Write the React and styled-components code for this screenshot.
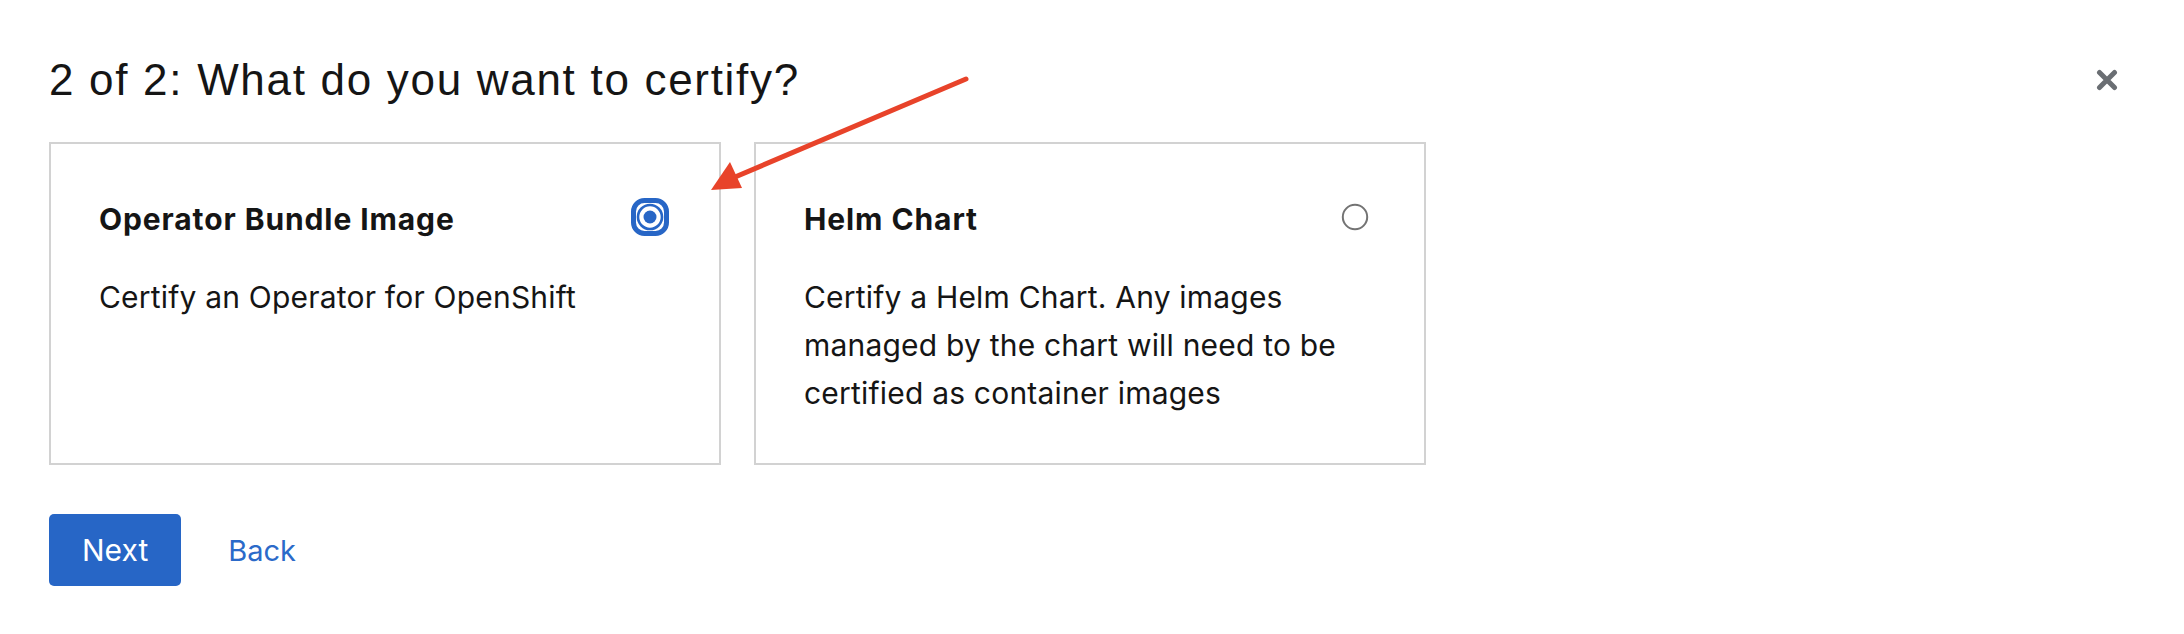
import React from 'react';
import styled, { createGlobalStyle } from 'styled-components';

const GlobalStyle = createGlobalStyle`
  body {
    margin: 0;
    background: #fff;
    font-family: Inter, 'Liberation Sans', Arial, sans-serif;
    color: #151515;
  }
`;

const Page = styled.div`
  position: relative;
  width: 2184px;
  height: 634px;
  padding: 53px 0 0 49px;
  box-sizing: border-box;
`;

const Header = styled.div`
  display: flex;
  align-items: center;
  justify-content: space-between;
  width: 2070px;
`;

const Title = styled.h1`
  margin: 0;
  font-family: 'Liberation Sans', Arial, sans-serif;
  font-size: 44px;
  line-height: 53px;
  font-weight: 400;
  letter-spacing: 1.7px;
  color: #151515;
`;

const Close = styled.button`
  border: none;
  background: none;
  padding: 0;
  width: 24px;
  height: 24px;
  display: flex;
  align-items: center;
  justify-content: center;
  cursor: pointer;
`;

const Cards = styled.div`
  display: flex;
  gap: 33px;
  margin-top: 36px;
`;

const Card = styled.div`
  width: 672px;
  height: 323px;
  box-sizing: border-box;
  border: 2px solid #d2d2d2;
  padding: 54px 50px 0 48px;
`;

const CardHead = styled.div`
  display: flex;
  align-items: center;
  justify-content: space-between;
  height: 42px;
`;

const CardTitle = styled.div`
  font-size: 30px;
  line-height: 42px;
  font-weight: 700;
  letter-spacing: 0.9px;
`;

const CardBody = styled.p`
  margin: 33px 0 0;
  font-size: 30px;
  line-height: 48px;
  letter-spacing: 0.2px;
  max-width: 570px;
`;

const RadioBox = styled.span`
  display: flex;
  width: 38px;
  height: 38px;
  align-items: center;
  justify-content: center;
  margin-top: -4px;
`;

const Actions = styled.div`
  display: flex;
  align-items: center;
  gap: 47px;
  margin-top: 49px;
`;

const Primary = styled.button`
  height: 72px;
  padding: 0 33px;
  border: none;
  border-radius: 5px;
  background: #2766c6;
  color: #fff;
  font-family: Inter, 'Liberation Sans', Arial, sans-serif;
  font-size: 30px;
`;

const LinkButton = styled.button`
  border: none;
  background: none;
  padding: 0;
  color: #2b6ac9;
  font-family: Inter, 'Liberation Sans', Arial, sans-serif;
  font-size: 29px;
`;

const Annotation = styled.svg`
  position: absolute;
  left: 0;
  top: 0;
  pointer-events: none;
`;

function Radio({ checked }) {
  return (
    <RadioBox>
      {checked ? (
        <svg width="38" height="38" viewBox="0 0 38 38">
          <rect x="2.5" y="2.5" width="33" height="33" rx="11" fill="none" stroke="#2766c6" strokeWidth="5" />
          <circle cx="19" cy="19" r="12" fill="none" stroke="#2766c6" strokeWidth="2.6" />
          <circle cx="19" cy="19" r="6.5" fill="#2766c6" />
        </svg>
      ) : (
        <svg width="28" height="28" viewBox="0 0 28 28">
          <circle cx="14" cy="14" r="12.2" fill="none" stroke="#737373" strokeWidth="2" />
        </svg>
      )}
    </RadioBox>
  );
}

const options = [
  { title: 'Operator Bundle Image', text: 'Certify an Operator for OpenShift', checked: true },
  {
    title: 'Helm Chart',
    text: 'Certify a Helm Chart. Any images managed by the chart will need to be certified as container images',
    checked: false,
  },
];

export default function App() {
  return (
    <>
      <GlobalStyle />
      <Page>
        <Header>
          <Title>2 of 2: What do you want to certify?</Title>
          <Close aria-label="Close">
            <svg width="22" height="22" viewBox="0 0 22 22">
              <path d="M3.5 3.5 L18.5 18.5 M18.5 3.5 L3.5 18.5" stroke="#6a6e73" strokeWidth="5" strokeLinecap="round" />
            </svg>
          </Close>
        </Header>
        <Cards>
          {options.map((o) => (
            <Card key={o.title}>
              <CardHead>
                <CardTitle>{o.title}</CardTitle>
                <Radio checked={o.checked} />
              </CardHead>
              <CardBody>{o.text}</CardBody>
            </Card>
          ))}
        </Cards>
        <Actions>
          <Primary>Next</Primary>
          <LinkButton>Back</LinkButton>
        </Actions>
        <Annotation width="2184" height="634">
          <line x1="966" y1="79" x2="728" y2="180" stroke="#e8432a" strokeWidth="5" strokeLinecap="round" />
          <polygon points="711,190 730,162 742,188" fill="#e8432a" />
        </Annotation>
      </Page>
    </>
  );
}
